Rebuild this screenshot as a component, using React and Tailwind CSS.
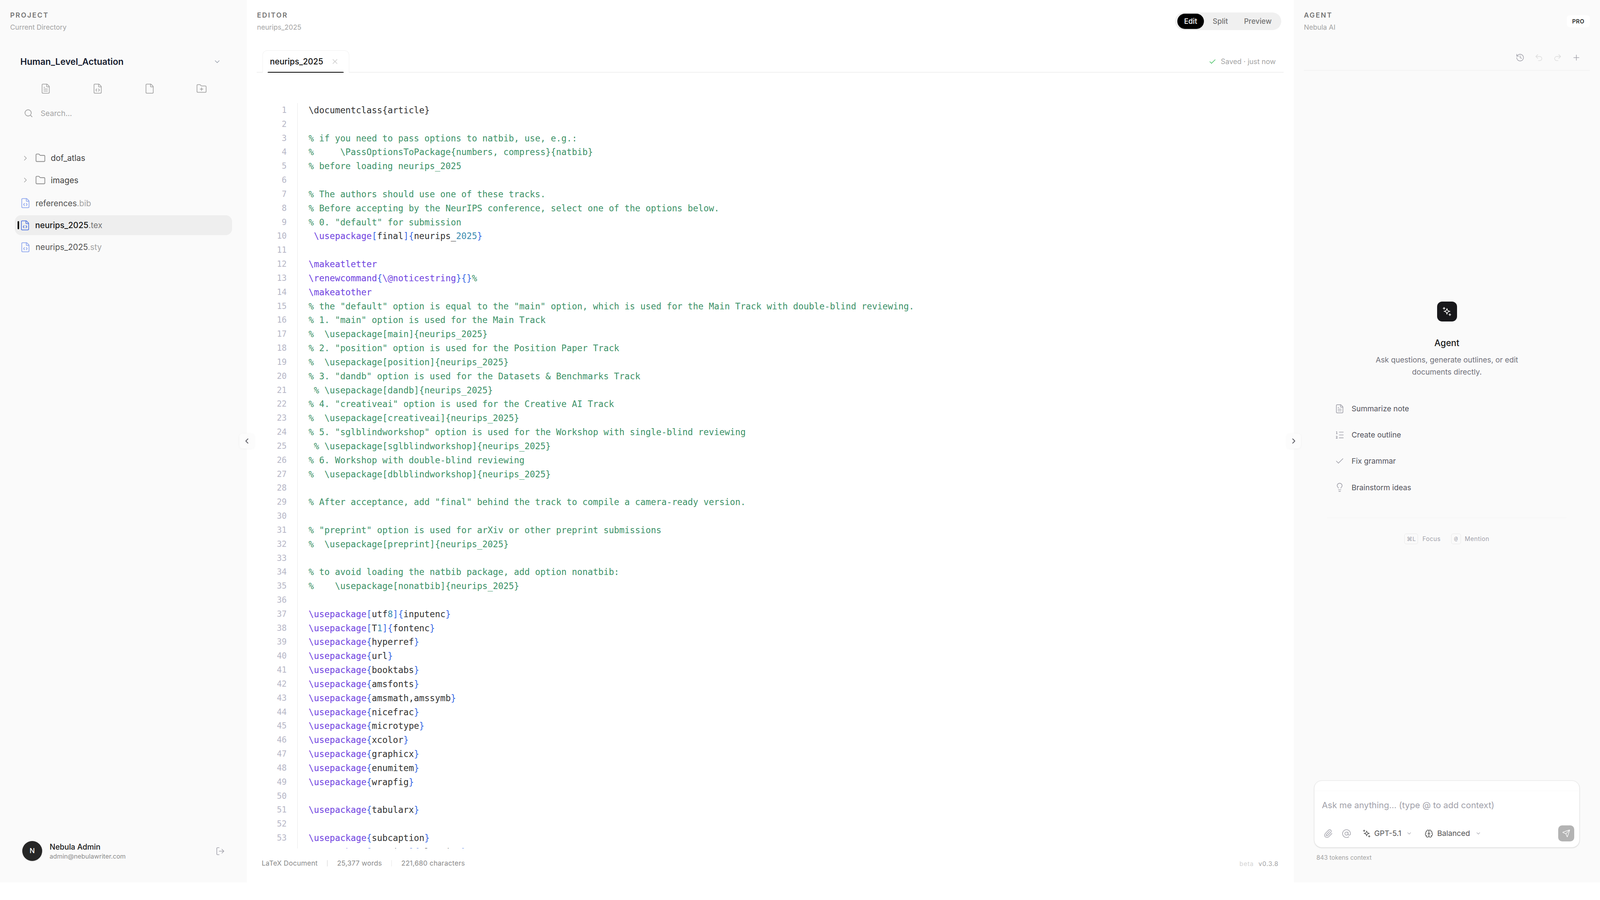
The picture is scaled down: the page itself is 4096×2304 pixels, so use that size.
import {
  AtSign, Brain, Check, ChevronDown, ChevronLeft, ChevronRight, File, FileCode, FileText, Folder, FolderPlus,
  History, Lightbulb, ListOrdered, LogOut, Paperclip, Plus, Redo2, Search, Send, Undo2, X,
} from "lucide-react";

const codeLines = [
  "\\documentclass{article}",
  "",
  "% if you need to pass options to natbib, use, e.g.:",
  "%     \\PassOptionsToPackage{numbers, compress}{natbib}",
  "% before loading neurips_2025",
  "",
  "% The authors should use one of these tracks.",
  "% Before accepting by the NeurIPS conference, select one of the options below.",
  "% 0. \"default\" for submission",
  " \\usepackage[final]{neurips_2025}",
  "",
  "\\makeatletter",
  "\\renewcommand{\\@noticestring}{}%",
  "\\makeatother",
  "% the \"default\" option is equal to the \"main\" option, which is used for the Main Track with double-blind reviewing.",
  "% 1. \"main\" option is used for the Main Track",
  "%  \\usepackage[main]{neurips_2025}",
  "% 2. \"position\" option is used for the Position Paper Track",
  "%  \\usepackage[position]{neurips_2025}",
  "% 3. \"dandb\" option is used for the Datasets & Benchmarks Track",
  " % \\usepackage[dandb]{neurips_2025}",
  "% 4. \"creativeai\" option is used for the Creative AI Track",
  "%  \\usepackage[creativeai]{neurips_2025}",
  "% 5. \"sglblindworkshop\" option is used for the Workshop with single-blind reviewing",
  " % \\usepackage[sglblindworkshop]{neurips_2025}",
  "% 6. Workshop with double-blind reviewing",
  "%  \\usepackage[dblblindworkshop]{neurips_2025}",
  "",
  "% After acceptance, add \"final\" behind the track to compile a camera-ready version.",
  "",
  "% \"preprint\" option is used for arXiv or other preprint submissions",
  "%  \\usepackage[preprint]{neurips_2025}",
  "",
  "% to avoid loading the natbib package, add option nonatbib:",
  "%    \\usepackage[nonatbib]{neurips_2025}",
  "",
  "\\usepackage[utf8]{inputenc}",
  "\\usepackage[T1]{fontenc}",
  "\\usepackage{hyperref}",
  "\\usepackage{url}",
  "\\usepackage{booktabs}",
  "\\usepackage{amsfonts}",
  "\\usepackage{amsmath,amssymb}",
  "\\usepackage{nicefrac}",
  "\\usepackage{microtype}",
  "\\usepackage{xcolor}",
  "\\usepackage{graphicx}",
  "\\usepackage{enumitem}",
  "\\usepackage{wrapfig}",
  "",
  "\\usepackage{tabularx}",
  "",
  "\\usepackage{subcaption}",
  "\\usepackage[section]{placeins}",
];

function tokenClass(t) {
  if (t.startsWith("\\")) return "text-[#6f42e0]";
  if (/^[{}\[\]]$/.test(t)) return "text-[#3b6be6]";
  if (/^\d+$/.test(t)) return "text-[#3a8bb0]";
  return "text-[#333333]";
}

function CodeLine({ line }) {
  if (line === "") return <div className="h-[35.84px]" />;
  if (line.startsWith("\\documentclass")) return <div className="h-[35.84px] text-[#333333]">{line}</div>;
  const pct = line.indexOf("%");
  const body = pct === -1 ? line : line.slice(0, pct);
  const comment = pct === -1 ? "" : line.slice(pct);
  const tokens = body.match(/\\[@a-zA-Z]+|[{}\[\]]|\d+|[^\\{}\[\]\d]+/g) || [];
  return (
    <div className="h-[35.84px]">
      {tokens.map((t, i) => <span key={i} className={tokenClass(t)}>{t}</span>)}
      {comment && <span className="text-[#3d9268]">{comment}</span>}
    </div>
  );
}

function StarIcon({ size, className }) {
  return (
    <svg width={size} height={size} viewBox="0 0 24 24" fill="none" stroke="currentColor" strokeWidth="1.7" strokeLinecap="round" strokeLinejoin="round" className={className}>
      <path d="M12.2 4.8 C13 9.6 14.6 11.2 20 12 C14.6 12.8 13 14.4 12.2 19.4 C11.4 14.4 9.8 12.8 4.6 12 C9.8 11.2 11.4 9.6 12.2 4.8Z" />
      <path d="M4.8 1.8v5M2.3 4.3h5M19.6 18v5M17.1 20.5h5" />
    </svg>
  );
}

function PanelLabel({ title, sub }) {
  return (
    <div className="pt-[30px] pl-[26px]">
      <div className="h-[18px] text-[17.6px] leading-[18px] font-semibold tracking-[0.14em] text-[#737373]">{title}</div>
      <div className="mt-[12px] h-[20px] text-[17.6px] leading-[20px] text-[#a3a3a3]">{sub}</div>
    </div>
  );
}

function FolderRow({ name }) {
  return (
    <div className="flex h-[51px] items-center pl-[17px]">
      <ChevronRight size={20} className="text-[#a3a3a3]" />
      <Folder size={27} strokeWidth={1.6} className="ml-[15px] text-[#8a8a8a]" />
      <span className="ml-[13px] text-[20.8px] text-[#404040]">{name}</span>
    </div>
  );
}

function FileRow({ name, ext, active }) {
  return (
    <div className={active ? "relative flex h-[51px] items-center rounded-[16px] bg-[#eeeeee] pl-[12px]" : "flex h-[51px] items-center pl-[13px]"}>
      {active && <div className="absolute left-[7px] top-[15px] h-[21px] w-[3.5px] rounded-sm bg-black" />}
      <FileCode size={28} strokeWidth={1.5} className={active ? "text-[#4f74e0]" : "text-[#8ba4ee]"} />
      <span className={active ? "ml-[12px] text-[20.8px] font-medium text-[#171717]" : "ml-[12px] text-[20.8px] text-[#525252]"}>
        {name}<span className={active ? "font-normal text-[#737373]" : "text-[#a3a3a3]"}>{ext}</span>
      </span>
    </div>
  );
}

function Sidebar() {
  return (
    <aside className="flex h-[2259px] w-[632px] shrink-0 flex-col bg-[#fafafa]">
      <PanelLabel title="PROJECT" sub="Current Directory" />
      <div className="mt-[58px] flex h-[40px] items-center justify-between pl-[52px] pr-[66px]">
        <span className="text-[22.7px] font-semibold text-[#151a2d]">Human_Level_Actuation</span>
        <ChevronDown size={20} className="text-[#9ca3af]" />
      </div>
      <div className="ml-[51px] mt-[34px] grid h-[30px] w-[531px] grid-cols-4 place-items-center text-[#a3a3a3]">
        <FileText size={28} strokeWidth={1.5} />
        <FileCode size={28} strokeWidth={1.5} />
        <File size={28} strokeWidth={1.5} />
        <FolderPlus size={28} strokeWidth={1.5} />
      </div>
      <div className="mt-[33px] flex h-[30px] items-center gap-[19px] pl-[61px]">
        <Search size={24} strokeWidth={1.8} className="text-[#a3a3a3]" />
        <span className="text-[19.2px] text-[#a3a3a3]">Search...</span>
      </div>
      <div className="mx-[38px] mt-[74px] flex flex-col gap-[5.7px]">
        <FolderRow name="dof_atlas" />
        <FolderRow name="images" />
        <div className="flex flex-col gap-[5.3px] pt-[2.6px]">
          <FileRow name="references" ext=".bib" />
          <FileRow name="neurips_2025" ext=".tex" active />
          <FileRow name="neurips_2025" ext=".sty" />
        </div>
      </div>
      <div className="mt-auto flex items-center justify-between pb-[55px] pl-[57px] pr-[56px]">
        <div className="flex items-center gap-[19px]">
          <div className="flex h-[51px] w-[51px] items-center justify-center rounded-full bg-[#262626] text-[17.6px] font-medium text-white shadow-sm">N</div>
          <div>
            <div className="text-[19.4px] font-medium leading-[26px] text-[#171717]">Nebula Admin</div>
            <div className="text-[16.2px] leading-[22px] text-[#8a8a8a]">admin@nebulawriter.com</div>
          </div>
        </div>
        <LogOut size={24} strokeWidth={1.6} className="text-[#a1a1aa]" />
      </div>
    </aside>
  );
}

function Editor() {
  return (
    <main className="relative flex h-[2259px] min-w-0 flex-1 flex-col bg-white">
      <div className="flex h-[129px] items-start justify-between pr-[32px]">
        <PanelLabel title="EDITOR" sub="neurips_2025" />
        <div className="mt-[32px] flex h-[45px] items-center rounded-full bg-[#f0f0f0] px-[6px] text-[18.6px] font-medium text-[#737373]">
          <span className="flex h-[38.4px] w-[68px] items-center justify-center rounded-full bg-black text-white shadow-sm">Edit</span>
          <span className="flex w-[84px] justify-center">Split</span>
          <span className="flex w-[108px] justify-center">Preview</span>
        </div>
      </div>
      <div className="ml-[25px] mr-[26px] flex h-[57px] justify-between border-b-[2px] border-[#f0f0f0]">
        <div className="relative ml-[15px] flex h-[57px] w-[222px] items-center rounded-t-[12px] border-x-[1.6px] border-t-[1.6px] border-[#f0f0f0] bg-white pl-[18px]">
          <span className="text-[20.8px] font-medium text-[#111111]">neurips_2025</span>
          <X size={21} strokeWidth={1.4} className="absolute left-[174px] top-[17px] text-[#c4c4c4]" />
          <div className="absolute bottom-0 left-[12px] h-[2px] w-[195px] rounded-t bg-black" />
        </div>
        <div className="flex items-center gap-[11px] pr-[20px] pt-[2px] text-[18.2px] text-[#a3a3a3]">
          <Check size={20} strokeWidth={2} className="text-[#4ec46a]" />
          <span>Saved · just now</span>
        </div>
      </div>
      <div className="mt-[78px] flex h-[1908px] overflow-hidden text-[22.4px] leading-[35.84px] [font-family:'DejaVu_Sans_Mono',monospace]">
        <div className="w-[130px] shrink-0 border-r-[1.6px] border-[#e8e8e8] pr-[27px] pt-[1px] text-right text-[21px] text-[#b6b6c6]">
          {codeLines.map((_, i) => <div key={i} className="h-[35.84px]">{i + 1}</div>)}
        </div>
        <div className="whitespace-pre pl-[28px] pt-[1px]">
          {codeLines.map((line, i) => <CodeLine key={i} line={line} />)}
        </div>
      </div>
      <div className="flex h-[77px] items-center justify-between pl-[38px] pr-[39px] text-[17.6px] tracking-[0.01em] text-[#8a8a8a]">
        <div className="flex items-center gap-[24px]">
          <span>LaTeX Document</span>
          <div className="h-[16px] w-[1.6px] bg-[#e5e5e5]" />
          <span>25,377 words</span>
          <div className="h-[16px] w-[1.6px] bg-[#e5e5e5]" />
          <span>221,680 characters</span>
        </div>
        <div className="flex gap-[12px] text-[16px] tracking-[0.05em]">
          <span className="text-[#d4d4d4]">beta</span>
          <span className="text-[#a3a3a3]">v0.3.8</span>
        </div>
      </div>
    </main>
  );
}

const prompts = [
  { label: "Summarize note", icon: <FileText size={25} strokeWidth={1.6} /> },
  { label: "Create outline", icon: <ListOrdered size={25} strokeWidth={1.6} /> },
  { label: "Fix grammar", icon: <Check size={25} strokeWidth={1.6} /> },
  { label: "Brainstorm ideas", icon: <Lightbulb size={25} strokeWidth={1.6} /> },
];

function Agent() {
  return (
    <aside className="flex h-[2259px] w-[784px] shrink-0 flex-col bg-[#fafafa]">
      <div className="flex items-start justify-between pr-[26px]">
        <PanelLabel title="AGENT" sub="Nebula AI" />
        <div className="mt-[39px] flex h-[31px] w-[59px] items-center justify-center rounded-[8px] bg-white text-[14.4px] font-semibold tracking-[0.04em] text-[#262626]">PRO</div>
      </div>
      <div className="mt-[47px] flex h-[40px] items-center justify-end pr-[37px]">
        <div className="flex w-[48px] justify-center text-[#a1a1aa]"><History size={23} strokeWidth={1.6} /></div>
        <div className="flex w-[48px] justify-center text-[#dedede]"><Undo2 size={23} strokeWidth={1.6} /></div>
        <div className="flex w-[48px] justify-center text-[#dedede]"><Redo2 size={23} strokeWidth={1.6} /></div>
        <div className="flex w-[48px] justify-center text-[#a1a1aa]"><Plus size={23} strokeWidth={1.6} /></div>
      </div>
      <div className="ml-[26px] mr-[26px] mt-[12px] h-[2px] bg-[#f3f3f3]" />
      <div className="flex flex-1 flex-col items-center justify-center">
        <div className="flex h-[51px] w-[51px] items-center justify-center rounded-[13px] bg-[#18181b] text-white">
          <StarIcon size={24} />
        </div>
        <div className="mt-[41px] text-[22.4px] font-medium leading-[28px] text-[#171717]">Agent</div>
        <div className="mt-[14px] w-[420px] text-center text-[19.2px] leading-[31px] text-[#71717a]">Ask questions, generate outlines, or edit documents directly.</div>
        <div className="mt-[45px] w-[614px]">
          {prompts.map((p) => (
            <div key={p.label} className="flex h-[67.2px] items-center gap-[18px] pl-[20px] text-[19.2px] text-[#52525b]">
              <span className="text-[#a1a1aa]">{p.icon}</span>
              {p.label}
            </div>
          ))}
          <div className="mt-[43px] h-[1.6px] bg-[#f5f5f5]" />
        </div>
        <div className="mt-[40px] flex h-[27px] items-center text-[15.5px] tracking-[0.03em] text-[#a1a1aa]">
          <span className="flex h-[27px] w-[35px] items-center justify-center rounded-[5px] border-[1.6px] border-[#e8e8e8] text-[14.4px]">⌘L</span>
          <span className="ml-[11px]">Focus</span>
          <span className="ml-[27px] flex h-[27px] w-[25px] items-center justify-center rounded-[5px] border-[1.6px] border-[#e8e8e8] text-[14.4px] [font-family:'DejaVu_Sans_Mono',monospace]">@</span>
          <span className="ml-[10px]">Mention</span>
        </div>
      </div>
      <div className="pb-[53px] pt-[14px]">
        <div className="mx-[52px] flex h-[172px] flex-col rounded-[20px] border-[1.6px] border-[#e5e5e5] bg-white shadow-sm">
          <div className="h-[26px] border-b-[1.6px] border-[#fafafa]" />
          <div className="mt-[21px] h-[30px] pl-[19px] text-[21.9px] leading-[30px] text-[#a1a1aa]">Ask me anything... (type @ to add context)</div>
          <div className="mt-[37px] flex h-[41px] items-center pl-[23px] pr-[13px]">
            <Paperclip size={24} strokeWidth={1.6} className="text-[#a1a1aa]" />
            <AtSign size={24} strokeWidth={1.6} className="ml-[23px] text-[#a1a1aa]" />
            <StarIcon size={21} className="ml-[29px] text-[#525252]" />
            <span className="ml-[9px] text-[19.2px] text-[#525252]">GPT-5.1</span>
            <ChevronDown size={15} className="ml-[13px] text-[#a1a1aa]" />
            <Brain size={22} strokeWidth={1.6} className="ml-[32px] text-[#525252]" />
            <span className="ml-[10px] text-[19.2px] text-[#525252]">Balanced</span>
            <ChevronDown size={15} className="ml-[14px] text-[#a1a1aa]" />
            <div className="ml-auto flex h-[41px] w-[41px] items-center justify-center rounded-[10px] bg-[#b3b3b3] text-white">
              <Send size={21} strokeWidth={1.6} />
            </div>
          </div>
        </div>
        <div className="ml-[58px] mt-[16px] h-[20px] text-[15.5px] leading-[20px] text-[#a3a3a3]">843 tokens context</div>
      </div>
    </aside>
  );
}

function Handle({ left, children }) {
  return (
    <div className={left ? "absolute left-[613px] top-[1110px] flex h-[38px] w-[38px] items-center justify-center rounded-[8px] bg-[#fcfcfc] text-[#52525b] shadow-[0_1px_6px_rgba(0,0,0,0.04)]" : "absolute left-[3294px] top-[1110px] flex h-[38px] w-[36px] items-center justify-center rounded-[8px] bg-[#fcfcfc] text-[#52525b] shadow-[0_1px_6px_rgba(0,0,0,0.04)]"}>
      {children}
    </div>
  );
}

export default function App() {
  return (
    <div className="relative flex h-[2304px] w-[4096px] items-start overflow-hidden bg-white [font-family:Inter,sans-serif]">
      <Sidebar />
      <Editor />
      <Agent />
      <Handle left><ChevronLeft size={22} strokeWidth={2} /></Handle>
      <Handle><ChevronRight size={22} strokeWidth={2} /></Handle>
    </div>
  );
}
